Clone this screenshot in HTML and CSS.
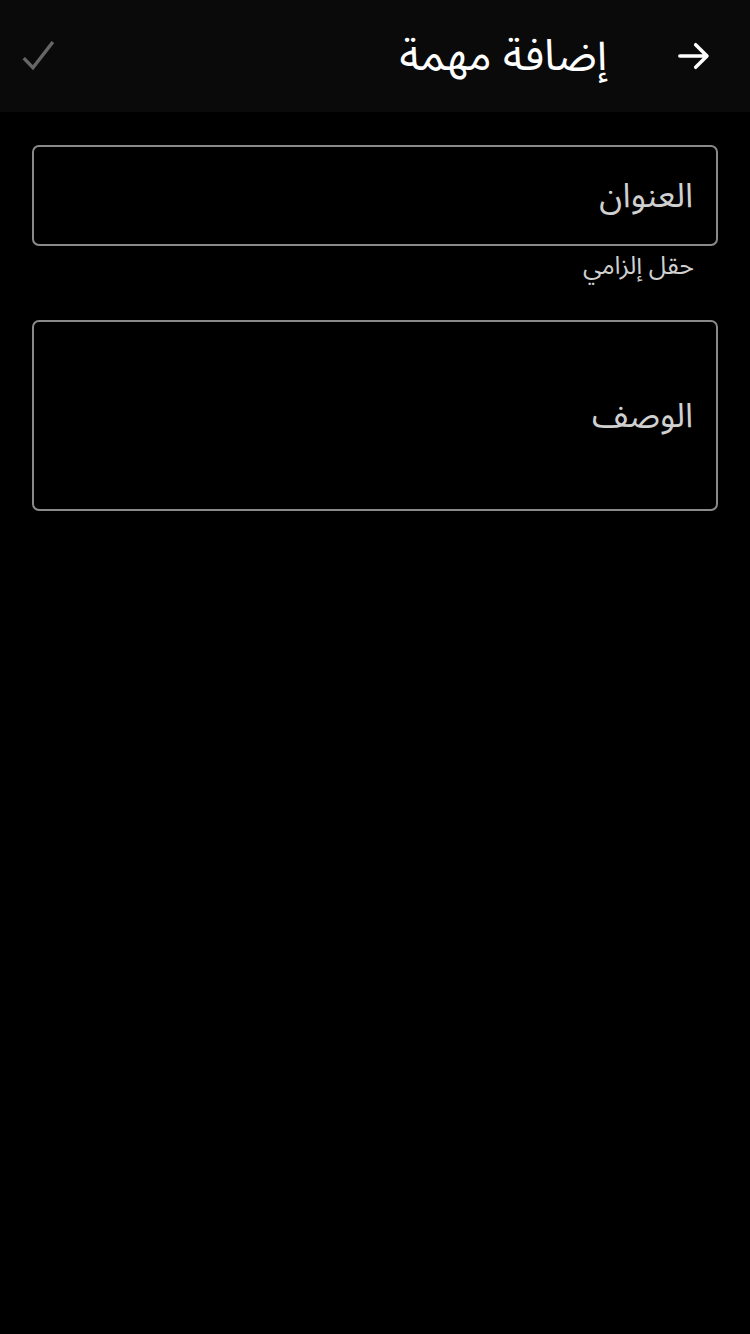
FILE: index.html
```html
<!DOCTYPE html>
<html lang="ar" dir="rtl">
<head>
<meta charset="utf-8">
<link rel="stylesheet" href="styles.css">
</head>
<body>
<div class="screen">
  <header class="appbar">
    <button class="icon-btn back" aria-label="رجوع">
      <svg width="40" height="40" viewBox="0 0 24 24"><path d="M3.5 12h16M13 5.2l6.8 6.8-6.8 6.8" fill="none" stroke="#fff" stroke-width="2.1" stroke-linecap="round" stroke-linejoin="round"/></svg>
    </button>
    <h1 class="title">إضافة مهمة</h1>
    <button class="icon-btn save" aria-label="حفظ">
      <svg width="46" height="46" viewBox="0 0 24 24"><path d="M3 12.6l4.8 5L18.2 4.2" fill="none" stroke="#666" stroke-width="1.8"/></svg>
    </button>
  </header>
  <main class="form">
    <div class="field">
      <div class="box box-title"><span class="label">العنوان</span></div>
      <div class="helper">حقل إلزامي</div>
    </div>
    <div class="field">
      <div class="box box-desc"><span class="label">الوصف</span></div>
    </div>
  </main>
</div>
</body>
</html>
```
FILE: styles.css
```css
* { box-sizing: border-box; }
html, body { margin: 0; padding: 0; background: #000; }
body {
  font-family: "Noto Sans Arabic", "Noto Sans", "DejaVu Sans", sans-serif;
  color: #fff;
  width: 750px;
  height: 1334px;
}
.screen { display: flex; flex-direction: column; }
.appbar {
  height: 112px;
  background: #0a0a0a;
  display: flex;
  align-items: center;
  padding: 0 13px 0 18px;
}
.icon-btn {
  background: none;
  border: 0;
  padding: 0;
  width: 46px;
  height: 46px;
  display: flex;
  align-items: center;
  justify-content: center;
}
.back { margin-right: 20px; }
.title {
  margin: 0 64px 0 0;
  font-size: 44px;
  font-weight: 400;
  color: #fff;
  line-height: 1;
}
.save { margin-right: auto; margin-top: 2px; }
.form {
  padding: 33px 32px 0;
  display: flex;
  flex-direction: column;
}
.box {
  border: 2px solid #8a8a8a;
  border-radius: 7px;
  display: flex;
  align-items: center;
  padding: 0 23px;
}
.box-title { height: 101px; }
.box-desc { height: 191px; }
.label {
  font-size: 34px;
  color: #d0d0d0;
}
.helper {
  font-size: 25px;
  line-height: 40px;
  color: #d0d0d0;
  padding: 0 24px;
  height: 74px;
}
```
